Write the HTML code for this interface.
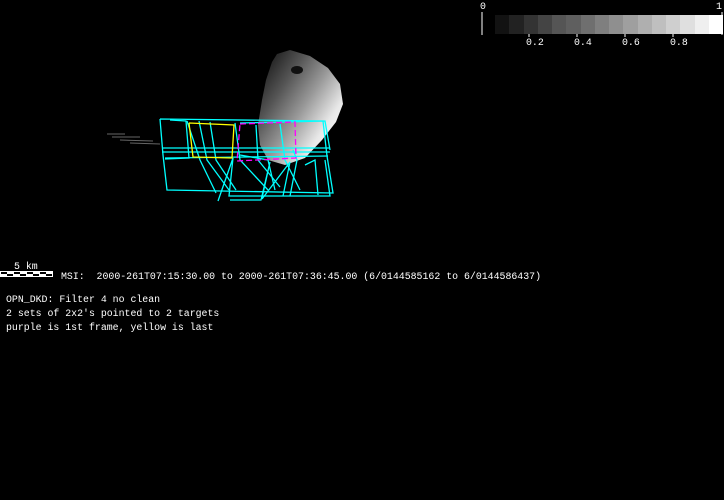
<!DOCTYPE html>
<html><head><style>
html,body{margin:0;padding:0;background:#000;width:724px;height:500px;overflow:hidden;position:relative}
.t{position:absolute;color:#fff;font-family:"Liberation Mono",monospace;font-size:9.9px;white-space:pre;line-height:12px}
</style></head><body>
<svg width="724" height="500" style="position:absolute;left:0;top:0">
<defs>
<linearGradient id="g" x1="0" y1="0.1" x2="0.9" y2="0.9">
<stop offset="0" stop-color="#111"/><stop offset="0.3" stop-color="#555"/><stop offset="0.55" stop-color="#999"/><stop offset="0.8" stop-color="#e8e8e8"/><stop offset="1" stop-color="#fff"/>
</linearGradient>
</defs>
<path d="M277,54 L290,50 L310,56 L328,68 L340,84 L343,104 L336,122 L322,140 L305,158 L285,165 L268,160 L260,145 L258,125 L262,100 L266,80 L272,62 Z" fill="url(#g)"/>
<ellipse cx="297" cy="70" rx="6" ry="4" fill="#111"/>
<g stroke="#666" stroke-width="1">
<line x1="107" y1="134" x2="125" y2="134"/><line x1="112" y1="137" x2="140" y2="137"/><line x1="120" y1="140" x2="153" y2="141"/><line x1="130" y1="143" x2="160" y2="144"/>
</g>
<line x1="482" y1="12" x2="482" y2="35" stroke="#fff"/>
<line x1="722" y1="12" x2="722" y2="35" stroke="#fff"/>
<g stroke="#fff"><line x1="529" y1="34" x2="529" y2="37"/><line x1="577" y1="34" x2="577" y2="37"/><line x1="625" y1="34" x2="625" y2="37"/><line x1="673" y1="34" x2="673" y2="37"/></g>
<g fill="none" stroke="#0ff" stroke-width="1.3">
<polyline points="160,119 323,121 327,156 333,193 167,190 163,155 160,119"/>
<polyline points="170,120 186,121 189,158 165,159"/>
<polyline points="162,148 330,148"/><polyline points="162,152 330,152"/><polyline points="165,158 328,156"/>
<polyline points="187,121 200,160 216,193"/><polyline points="199,121 207,160 229,190"/>
<polyline points="210,122 216,160 236,190"/><polyline points="235,123 240,160 268,190"/>
<polyline points="240,123 325,121 330,150"/><polyline points="256,125 258,160 280,187"/>
<polyline points="280,124 285,160 300,190"/>
<polyline points="218,201 233,158 229,196 330,196 325,160"/>
<polyline points="230,200 261,200 270,162 262,198"/>
<polyline points="262,199 290,162 283,196"/>
<polyline points="290,196 297,160 293,150"/>
<polyline points="305,165 315,160 318,195"/>
<polyline points="240,155 268,160 275,190"/>
</g>
<polyline points="189,123 234,125 232,158 193,157 189,123" fill="none" stroke="#ff0" stroke-width="1.3"/>
<polyline points="240,124 295,122 296,158 237,161 240,124" fill="none" stroke="#f0f" stroke-width="1.3" stroke-dasharray="6,3"/>
<rect x="0" y="271" width="53" height="6" fill="#fff"/>
<g fill="#000"><rect x="1" y="272" width="6" height="2"/><rect x="7" y="274" width="6" height="2"/><rect x="14" y="272" width="6" height="2"/><rect x="20" y="274" width="6" height="2"/><rect x="27" y="272" width="6" height="2"/><rect x="33" y="274" width="6" height="2"/><rect x="40" y="272" width="6" height="2"/><rect x="46" y="274" width="6" height="2"/></g>
</svg>
<div style="position:absolute;left:495px;top:15px;width:228px;height:19px;display:flex">
<div style="flex:1;background:#121212"></div><div style="flex:1;background:#222"></div><div style="flex:1;background:#333"></div><div style="flex:1;background:#444"></div><div style="flex:1;background:#555"></div><div style="flex:1;background:#5f5f5f"></div><div style="flex:1;background:#6f6f6f"></div><div style="flex:1;background:#7f7f7f"></div><div style="flex:1;background:#8f8f8f"></div><div style="flex:1;background:#9f9f9f"></div><div style="flex:1;background:#afafaf"></div><div style="flex:1;background:#bfbfbf"></div><div style="flex:1;background:#cfcfcf"></div><div style="flex:1;background:#dfdfdf"></div><div style="flex:1;background:#efefef"></div><div style="flex:1;background:#fff"></div>
</div>
<div class="t" style="left:480px;top:1px">0</div>
<div class="t" style="left:716px;top:1px">1</div>
<div class="t" style="left:526px;top:37px">0.2</div>
<div class="t" style="left:574px;top:37px">0.4</div>
<div class="t" style="left:622px;top:37px">0.6</div>
<div class="t" style="left:670px;top:37px">0.8</div>
<div class="t" style="left:14px;top:261px">5 km</div>
<div class="t" style="left:61px;top:271px">MSI:  2000-261T07:15:30.00 to 2000-261T07:36:45.00 (6/0144585162 to 6/0144586437)</div>
<div class="t" style="left:6px;top:294px">OPN_DKD: Filter 4 no clean</div>
<div class="t" style="left:6px;top:308px">2 sets of 2x2's pointed to 2 targets</div>
<div class="t" style="left:6px;top:322px">purple is 1st frame, yellow is last</div>
</body></html>
